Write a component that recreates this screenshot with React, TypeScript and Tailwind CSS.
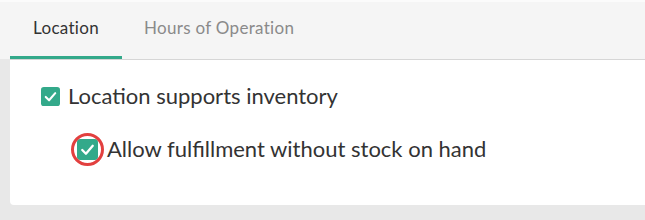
import React from "react";

function Check({ size }: { size: number }) {
  return (
    <svg width={size} height={size} viewBox="0 0 20 20" className="block">
      <rect x="0" y="0" width="20" height="20" rx="3" fill="#33a98a" />
      <path d="M5 10.5 L8.5 14 L15 6.5" fill="none" stroke="#ffffff" strokeWidth="2.2" strokeLinecap="round" strokeLinejoin="round" />
    </svg>
  );
}

export default function App() {
  return (
    <div className="w-[645px] h-[220px] bg-[#e8e8e8] flex flex-col overflow-hidden" style={{ fontFamily: "Lato, 'Open Sans', sans-serif" }}>
      <div className="h-[2px] bg-[#fbfbfb]" />
      <div className="h-[57px] bg-[#f5f5f5] flex items-stretch pl-[10px]">
        <div className="w-[112px] flex items-center justify-center text-[17px] tracking-[0.3px] text-[#333333] border-b-[3px] border-[#33a98a] pb-[2px]">
          Location
        </div>
        <div className="flex items-center pl-[22px] text-[17px] tracking-[0.3px] text-[#8a8a8a] pb-[5px]">
          Hours of Operation
        </div>
      </div>
      <div className="pl-[10px]">
        <div className="h-[146px] bg-white border-t border-[#d6d6d6] rounded-bl-[4px] flex flex-col pt-[25px] pl-[31px]">
          <div className="flex items-center gap-[8px] h-[22px]">
            <Check size={19} />
            <span className="text-[22px] text-[#333333] leading-none">Location supports inventory</span>
          </div>
          <div className="flex items-center gap-[9px] mt-[31px] ml-[36px] h-[22px]">
            <div className="relative w-[21px] h-[21px]">
              <Check size={21} />
              <div className="absolute -left-[6px] -top-[6px] w-[33px] h-[33px] rounded-full border-[3px] border-[#e2403f]" />
            </div>
            <span className="text-[22px] text-[#333333] leading-none">Allow fulfillment without stock on hand</span>
          </div>
        </div>
      </div>
    </div>
  );
}
